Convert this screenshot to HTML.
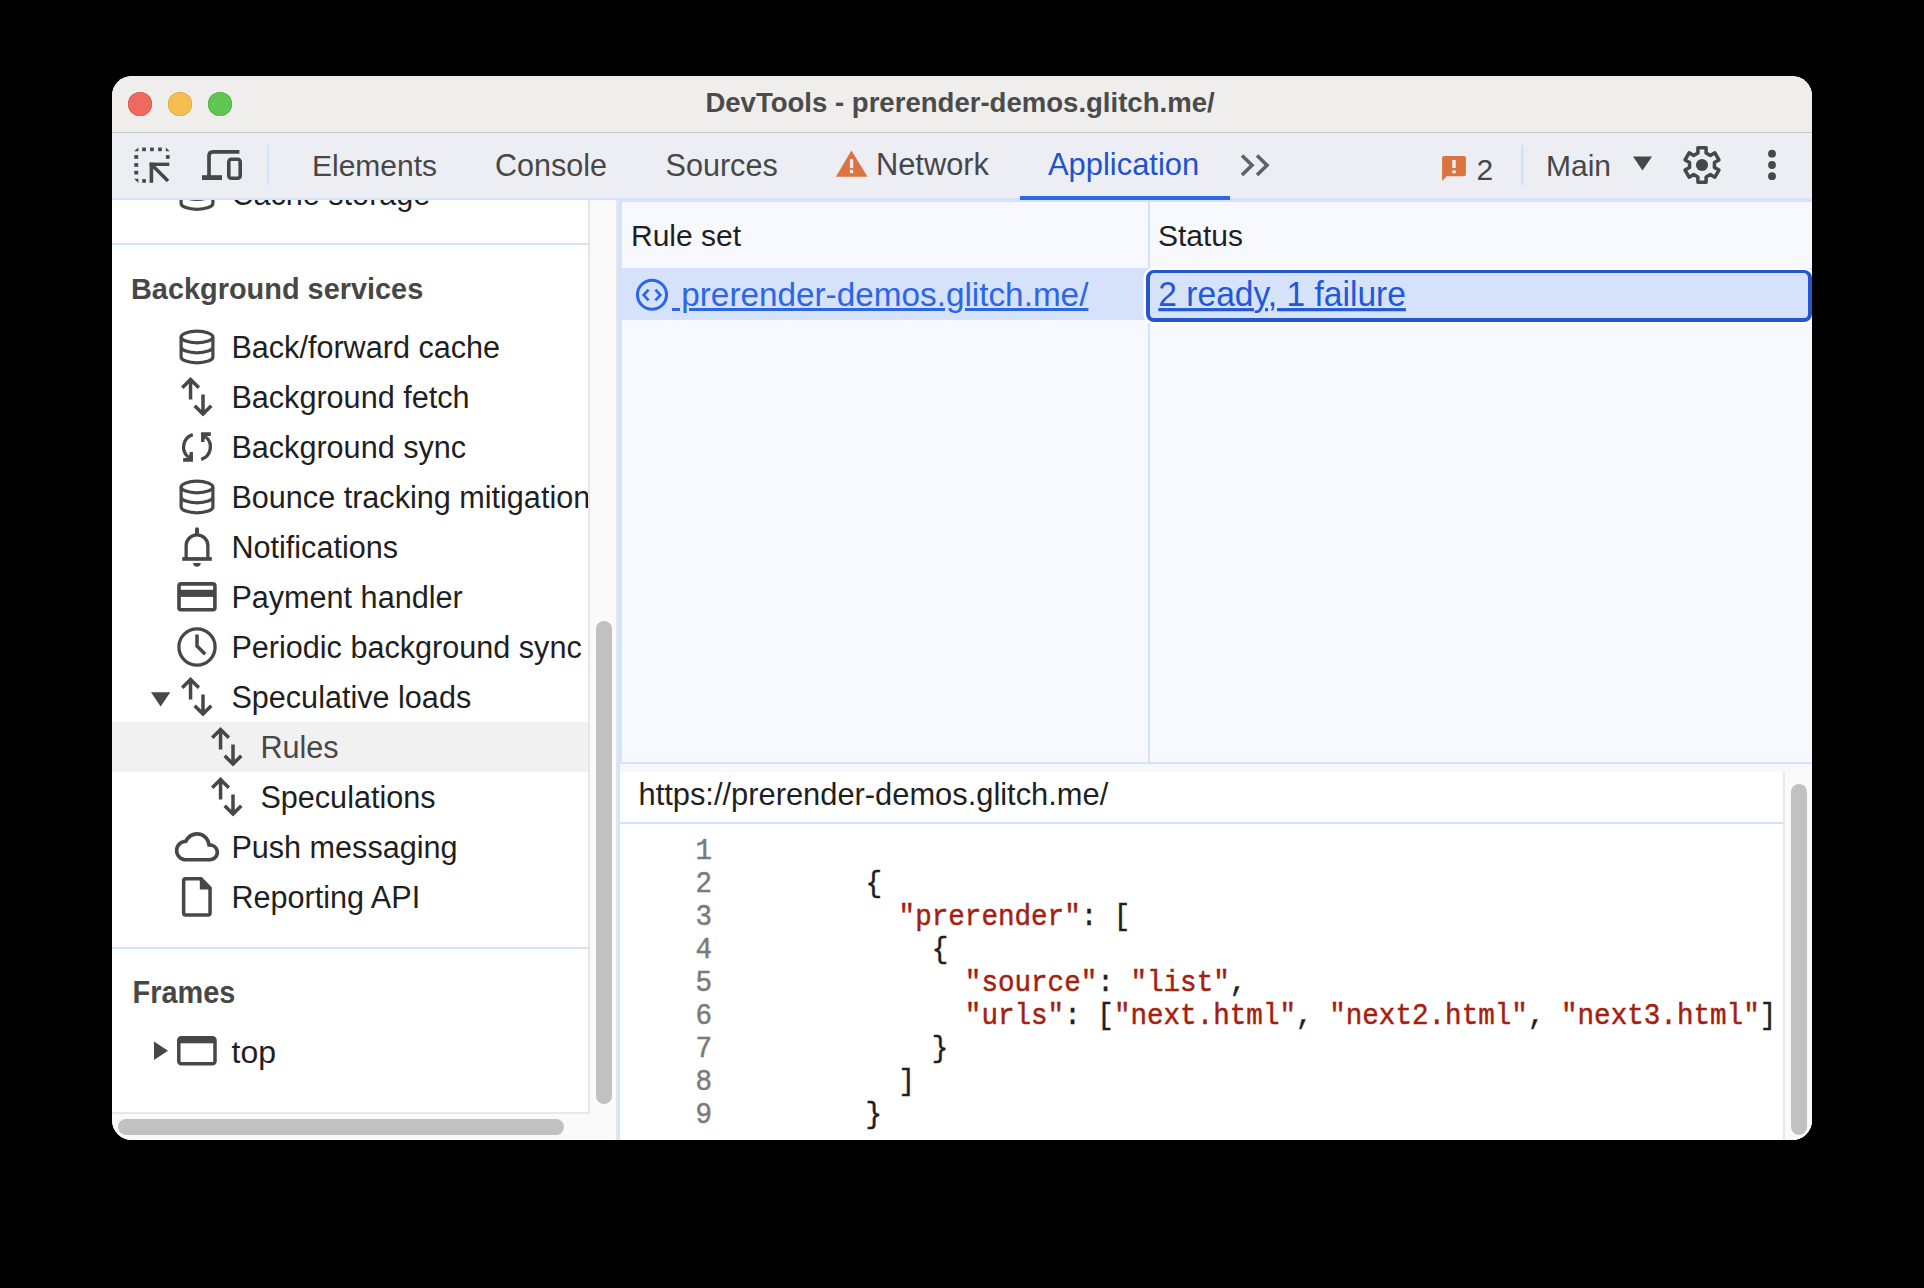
<!DOCTYPE html>
<html><head><meta charset="utf-8">
<style>
html,body{margin:0;padding:0;background:#000;width:1924px;height:1288px;overflow:hidden}
*{box-sizing:border-box}
body{font-family:"Liberation Sans",sans-serif;position:relative}
#win{position:absolute;left:112px;top:76px;width:1700px;height:1064px;border-radius:20px;overflow:hidden;background:#fff}
#abs{position:absolute;left:-112px;top:-76px;width:1924px;height:1288px}
.a{position:absolute}
.t{position:absolute;white-space:pre;line-height:1}
svg{position:absolute;overflow:visible}
.mono{font-family:"Liberation Mono",monospace;font-size:27.6px;transform:scaleY(1.07);transform-origin:0 0;-webkit-text-stroke:0.45px currentColor}
.str{color:#a31f10}
</style></head><body>
<div id="win"><div id="abs">

<!-- title bar -->
<div class="a" style="left:112px;top:76px;width:1700px;height:56px;background:#efeeec"></div>
<div class="a" style="left:112px;top:132px;width:1700px;height:1px;background:#c9c8cb"></div>
<div class="a" style="left:128px;top:92px;width:24px;height:24px;border-radius:50%;background:#ed6a5e;box-shadow:inset 0 0 0 0.6px #d05548"></div>
<div class="a" style="left:168px;top:92px;width:24px;height:24px;border-radius:50%;background:#f5bf4f;box-shadow:inset 0 0 0 0.6px #d6a03a"></div>
<div class="a" style="left:208px;top:92px;width:24px;height:24px;border-radius:50%;background:#61c554;box-shadow:inset 0 0 0 0.6px #4ea83f"></div>
<div class="t" style="left:110px;width:1700px;text-align:center;top:88.8px;font-size:27.55px;font-weight:bold;color:#4b4b4b">DevTools - prerender-demos.glitch.me/</div>

<!-- toolbar -->
<div class="a" style="left:112px;top:133px;width:1700px;height:65px;background:#eceef3"></div>
<div class="a" style="left:112px;top:198px;width:1700px;height:2px;background:#d3e3fd"></div>


<!-- inspect icon -->
<svg style="left:0;top:0" width="1924" height="1288" viewBox="0 0 1924 1288">
<g fill="#474747">
<path d="M134.1 151.3 L138.4 147.4 L138.4 151.3 Z"/>
<rect x="142.2" y="147.5" width="3.7" height="3.7"/>
<rect x="150.1" y="147.5" width="3.7" height="3.7"/>
<rect x="158.1" y="147.5" width="3.7" height="3.7"/>
<path d="M165.8 147.4 L169.6 151.3 L165.8 151.3 Z"/>
<rect x="134.3" y="155.1" width="3.9" height="3.7"/>
<rect x="134.3" y="163.1" width="3.9" height="3.7"/>
<rect x="134.3" y="170.8" width="3.9" height="3.7"/>
<path d="M134.1 178.8 L138.4 178.8 L138.4 183 Z"/>
<rect x="142.2" y="179.1" width="3.7" height="3.7"/>
<rect x="165.9" y="155.1" width="3.7" height="3.7"/>
<rect x="149.6" y="162.6" width="3.6" height="20.2"/>
<rect x="149.6" y="162.6" width="19.7" height="3.4"/>
</g>
<path d="M152 165 L168 181" stroke="#474747" stroke-width="3.6" fill="none"/>
<!-- device icon -->
<path d="M209 176 V156 Q209 151.8 213 151.8 H239.4" stroke="#474747" stroke-width="3.7" fill="none"/>
<rect x="202" y="175.2" width="20" height="4.8" fill="#474747"/>
<rect x="228.8" y="159.3" width="11.4" height="19" rx="2.5" stroke="#474747" stroke-width="3.6" fill="none"/>
<!-- separator -->
<rect x="267" y="145" width="2" height="40" fill="#d3e3fd"/>
<!-- warning -->
<path d="M851.4 150.6 L867.6 176.8 L835.9 176.8 Z" fill="#dc7440"/>
<rect x="849.9" y="159" width="3.3" height="9" fill="#eceef3"/>
<rect x="849.9" y="169.8" width="3.3" height="3.4" fill="#eceef3"/>
<!-- chevrons >> -->
<path d="M1242 155.5 L1252 165.2 L1242 175 M1257 155.5 L1267 165.2 L1257 175" stroke="#5f6368" stroke-width="3.6" fill="none"/>
<!-- issues -->
<path d="M1442.1 158 Q1442.1 156 1444.1 156 L1463.9 156 Q1465.9 156 1465.9 158 L1465.9 174.2 Q1465.9 176.2 1463.9 176.2 L1446.8 176.2 L1442.1 180.9 Z" fill="#dc7440"/>
<rect x="1452.2" y="160" width="3.5" height="8" fill="#eceef3"/>
<rect x="1452.2" y="170.5" width="3.5" height="2.8" fill="#eceef3"/>
<rect x="1521" y="145" width="2.8" height="40" fill="#d3e3fd"/>
<!-- dropdown triangle -->
<path d="M1633 156.4 L1652 156.4 L1642.5 170.5 Z" fill="#474747"/>
<!-- gear -->
<g transform="translate(1702 165)">
<path id="gearp" d="M-4.10 -12.00 L-4.10 -17.20 L4.10 -17.20 L4.10 -12.00 L8.34 -9.55 L12.85 -12.15 L16.95 -5.05 L12.44 -2.45 L12.44 2.45 L16.95 5.05 L12.85 12.15 L8.34 9.55 L4.10 12.00 L4.10 17.20 L-4.10 17.20 L-4.10 12.00 L-8.34 9.55 L-12.85 12.15 L-16.95 5.05 L-12.44 2.45 L-12.44 -2.45 L-16.95 -5.05 L-12.85 -12.15 L-8.34 -9.55 Z" stroke="#474747" stroke-width="3.5" fill="none" stroke-linejoin="round"/>
<circle cx="0" cy="0" r="6.1" fill="#474747"/>
</g>
<!-- kebab -->
<circle cx="1772" cy="153.7" r="3.9" fill="#474747"/>
<circle cx="1772" cy="165" r="3.9" fill="#474747"/>
<circle cx="1772" cy="176.2" r="3.9" fill="#474747"/>
</svg>
<!-- tabs -->
<div class="t" style="left:312px;top:150.6px;font-size:30px;color:#474747">Elements</div>
<div class="t" style="left:495px;top:150.3px;font-size:30.5px;color:#474747">Console</div>
<div class="t" style="left:665.5px;top:150.25px;font-size:30.6px;color:#474747">Sources</div>
<div class="t" style="left:876px;top:150px;font-size:30.8px;color:#474747">Network</div>
<div class="t" style="left:1048px;top:149.9px;font-size:30.9px;color:#1f52cd">Application</div>
<div class="a" style="left:1020px;top:196px;width:210px;height:4px;background:#2e67e6"></div>
<div class="t" style="left:1476.5px;top:154.6px;font-size:30px;color:#474747">2</div>
<div class="t" style="left:1546px;top:150.6px;font-size:30px;color:#474747">Main</div>



<!-- sidebar bg -->
<div class="a" style="left:112px;top:200px;width:476px;height:912px;background:#fff"></div>
<div class="a" style="left:112px;top:722px;width:476px;height:50px;background:#f1f1f1"></div>
<div class="a" style="left:588px;top:200px;width:2px;height:912px;background:#e6e6e6"></div>
<div class="a" style="left:590px;top:200px;width:26px;height:940px;background:#fafafa"></div>
<div class="a" style="left:616px;top:200px;width:2px;height:940px;background:#e6e6e6"></div>
<div class="a" style="left:596px;top:621px;width:16px;height:483px;border-radius:8px;background:#c1c1c1"></div>
<div class="a" style="left:112px;top:1112px;width:478px;height:28px;background:#fafafa;border-top:2px solid #e8e8e8"></div>
<div class="a" style="left:118px;top:1119px;width:446px;height:16px;border-radius:8px;background:#c1c1c1"></div>
<div class="a" style="left:112px;top:243px;width:476px;height:2px;background:#d3e3fd"></div>
<div class="a" style="left:112px;top:947px;width:476px;height:2px;background:#d3e3fd"></div>
<div class="a" style="left:112px;top:200px;width:476px;height:912px;overflow:hidden">
<div class="a" style="left:-112px;top:-200px;width:1924px;height:1288px">
<div class="t" style="left:231.4px;top:178.79px;font-size:30.6px;color:#1f1f1f">Cache storage</div>
<div class="t" style="left:231.4px;top:332.29px;font-size:30.6px;color:#1f1f1f">Back/forward cache</div>
<div class="t" style="left:231.4px;top:382.29px;font-size:30.6px;color:#1f1f1f">Background fetch</div>
<div class="t" style="left:231.4px;top:432.29px;font-size:30.6px;color:#1f1f1f">Background sync</div>
<div class="t" style="left:231.4px;top:482.29px;font-size:30.6px;color:#1f1f1f">Bounce tracking mitigations</div>
<div class="t" style="left:231.4px;top:532.29px;font-size:30.6px;color:#1f1f1f">Notifications</div>
<div class="t" style="left:231.4px;top:582.29px;font-size:30.6px;color:#1f1f1f">Payment handler</div>
<div class="t" style="left:231.4px;top:632.29px;font-size:30.6px;color:#1f1f1f">Periodic background sync</div>
<div class="t" style="left:231.4px;top:682.29px;font-size:30.6px;color:#1f1f1f">Speculative loads</div>
<div class="t" style="left:260.4px;top:732.29px;font-size:30.6px;color:#474747">Rules</div>
<div class="t" style="left:260.4px;top:782.29px;font-size:30.6px;color:#1f1f1f">Speculations</div>
<div class="t" style="left:231.4px;top:832.29px;font-size:30.6px;color:#1f1f1f">Push messaging</div>
<div class="t" style="left:231.4px;top:882.29px;font-size:30.6px;color:#1f1f1f">Reporting API</div>

<div class="t" style="left:131px;top:275.21px;font-size:28.9px;font-weight:bold;color:#474747">Background services</div>
<div class="t" style="left:132.5px;top:978.71px;font-size:28.9px;font-weight:bold;color:#474747;transform:scaleY(1.07);transform-origin:0 24.5px">Frames</div>
<div class="t" style="left:231.5px;top:1036.29px;font-size:32px;color:#1f1f1f">top</div>
</div></div>

<svg style="left:0;top:0" width="1924" height="1288">
<defs>
<g id="i-db" fill="none" stroke="#474747" stroke-width="3.2">
<ellipse cx="0" cy="-10" rx="15.9" ry="5.8"/>
<path d="M-15.9 -10 V10 A15.9 5.8 0 0 0 15.9 10 V-10 M-15.9 0 A15.9 5.8 0 0 0 15.9 0"/>
</g>
<g id="i-arr" fill="none" stroke="#474747" stroke-width="3.5" stroke-linejoin="miter">
<path d="M-6.45 2.4 V-17.5 M-14.75 -9.2 L-6.45 -17.5 L1.85 -9.2 M6 -2.5 V17.1 M-2.3 8.8 L6 17.1 L14.3 8.8"/>
</g>
<g id="i-sync" fill="#474747" stroke="none">
<g id="i-sync-half">
<path d="M-4.2 -12.3 A13 13 0 0 0 -9.3 9.6" fill="none" stroke="#474747" stroke-width="3.3"/>
<path d="M-13.83 11.12 L-10.3 11.12 L-7.47 7.6 L-7.47 5.08 L-4.05 5.08 L-4.05 14.7 L-13.83 14.7 Z"/>
</g>
<use href="#i-sync-half" transform="rotate(180)"/>
</g>
<g id="i-bell" fill="#474747">
<rect x="-2" y="-19.8" width="4" height="8" rx="2"/>
<path d="M-10.85 11 V-1.5 A10.85 10.55 0 0 1 10.85 -1.5 V11" fill="none" stroke="#474747" stroke-width="3.3"/>
<rect x="-14.8" y="10.1" width="29.6" height="3.7"/>
<path d="M-3.8 16.1 H3.7 A3.75 3.7 0 0 1 -3.8 16.1 Z"/>
</g>
<g id="i-card" fill="#474747">
<rect x="-18" y="-13.1" width="35.9" height="25.9" rx="2" fill="none" stroke="#474747" stroke-width="3.6"/>
<rect x="-18" y="-7.2" width="36" height="7.1"/>
</g>
<g id="i-clock" fill="none" stroke="#474747" stroke-width="3.3">
<circle cx="0" cy="0" r="18.1"/>
<path d="M0 -12.5 V-1 L8.2 7.2" stroke-width="3.5"/>
</g>
<g id="i-cloud">
<path transform="translate(-22.2 -22.4) scale(1.85)" fill="#474747" d="M19.35 10.04C18.67 6.59 15.64 4 12 4 9.11 4 6.6 5.64 5.35 8.04 2.34 8.36 0 10.91 0 14c0 3.31 2.69 6 6 6h13c2.76 0 5-2.24 5-5 0-2.64-2.05-4.78-4.65-4.960zM19 18H6c-2.21 0-4-1.79-4-4 0-2.050 1.53-3.760 3.56-3.970l1.07-.11.5-.95C8.08 7.14 9.94 6 12 6c2.62 0 4.88 1.86 5.39 4.43l.3 1.5 1.53.11c1.56.1 2.78 1.41 2.78 2.96 0 1.65-1.35 3-3 3z"/>
</g>
<g id="i-file">
<path d="M4 -18.15 H-11.35 Q-13.35 -18.15 -13.35 -16.15 V16.05 Q-13.35 18.05 -11.35 18.05 H11.05 Q13.05 18.05 13.05 16.05 V-9.1 Z" fill="none" stroke="#474747" stroke-width="3.5" stroke-linejoin="round"/>
<path d="M2.8 -19.9 L14.8 -7.9 V-7.6 H2.8 Z" fill="#474747"/>
</g>
</defs>

<clipPath id="sbclip"><rect x="112" y="200" width="476" height="912"/></clipPath>
<g clip-path="url(#sbclip)">
<use href="#i-db" transform="translate(197 193.5)"/>
<use href="#i-db" transform="translate(197 347)"/>
<use href="#i-arr" transform="translate(197 397)"/>
<use href="#i-sync" transform="translate(197 447)"/>
<use href="#i-db" transform="translate(197 497)"/>
<use href="#i-bell" transform="translate(197 547)"/>
<use href="#i-card" transform="translate(197 597)"/>
<use href="#i-clock" transform="translate(197 647)"/>
<use href="#i-arr" transform="translate(197 697)"/>
<use href="#i-arr" transform="translate(227 747)"/>
<use href="#i-arr" transform="translate(227 797)"/>
<use href="#i-cloud" transform="translate(197 847)"/>
<use href="#i-file" transform="translate(197 897)"/>

<path d="M151 692.2 H170.3 L160.65 706.4 Z" fill="#474747"/>
<path d="M154 1041.6 L168 1050.8 L154 1060 Z" fill="#474747"/>
<rect x="178.8" y="1037.8" width="36.2" height="26" rx="2.5" fill="none" stroke="#474747" stroke-width="3.5"/>
<rect x="178.8" y="1037.8" width="36.2" height="5.5" fill="#474747"/>
</g>
</svg>




<!-- main panel -->
<div class="a" style="left:618px;top:200px;width:1194px;height:940px;background:#fff"></div>
<div class="a" style="left:618px;top:200px;width:1194px;height:564px;background:#d3e3fd"></div>
<div class="a" style="left:622px;top:202px;width:1190px;height:560px;background:#f8f9fe"></div>
<div class="a" style="left:1148px;top:202px;width:2px;height:560px;background:#d3e3fd"></div>
<div class="a" style="left:620px;top:268px;width:1192px;height:52px;background:#d5e2fa"></div>
<div class="t" style="left:631px;top:221.00px;font-size:30px;color:#1f1f1f">Rule set</div>
<div class="t" style="left:1158px;top:221.00px;font-size:30px;color:#1f1f1f">Status</div>
<svg style="left:0;top:0" width="1924" height="1288">
<circle cx="652" cy="294.75" r="14.55" fill="none" stroke="#2c65e8" stroke-width="3"/>
<path d="M648.6 289.6 L643.6 295 L648.6 300.4 M655.4 289.6 L660.4 295 L655.4 300.4" fill="none" stroke="#2c65e8" stroke-width="2.6"/>
</svg>
<div class="t" style="left:672px;top:278.3px;font-size:33.3px;color:#2c65e8;text-decoration:underline;text-decoration-thickness:3px;text-underline-offset:1.5px"> prerender-demos.glitch.me/</div>
<div class="a" style="left:1146px;top:270px;width:666px;height:52px;border:4px solid #2556cc;border-top-width:3px;border-radius:8px;background:#d5e2fa;box-shadow:0 0 0 2.5px #fff"></div>
<div class="t" style="left:1158.3px;top:277.8px;font-size:33.6px;color:#2158d8;text-decoration:underline;text-decoration-thickness:3px;text-underline-offset:1.5px;transform:scaleY(1.05);transform-origin:0 28.4px">2 ready, 1 failure</div>
<div class="a" style="left:618px;top:764px;width:2px;height:376px;background:#d3e3fd"></div>
<div class="a" style="left:620px;top:764px;width:1192px;height:8px;background:#f8f9fe"></div>
<div class="a" style="left:620px;top:822px;width:1163px;height:2px;background:#d3e3fd"></div>
<div class="t" style="left:638.5px;top:779.9px;font-size:30.85px;color:#1f1f1f">https://prerender-demos.glitch.me/</div>
<div class="a" style="left:1783px;top:772px;width:29px;height:368px;background:#fafafa;border-left:2px solid #e8e8e8"></div>
<div class="a" style="left:1791px;top:784px;width:16px;height:351px;border-radius:8px;background:#c1c1c1"></div>
<div class="t mono" style="left:640px;width:72px;text-align:right;top:837.09px;color:#7b7b7b">1</div>
<div class="t mono" style="left:733px;top:837.09px;color:#1f1f1f"></div>
<div class="t mono" style="left:640px;width:72px;text-align:right;top:870.09px;color:#7b7b7b">2</div>
<div class="t mono" style="left:733px;top:870.09px;color:#1f1f1f">        {</div>
<div class="t mono" style="left:640px;width:72px;text-align:right;top:903.09px;color:#7b7b7b">3</div>
<div class="t mono" style="left:733px;top:903.09px;color:#1f1f1f">          <span class="str">"prerender"</span>: [</div>
<div class="t mono" style="left:640px;width:72px;text-align:right;top:936.09px;color:#7b7b7b">4</div>
<div class="t mono" style="left:733px;top:936.09px;color:#1f1f1f">            {</div>
<div class="t mono" style="left:640px;width:72px;text-align:right;top:969.09px;color:#7b7b7b">5</div>
<div class="t mono" style="left:733px;top:969.09px;color:#1f1f1f">              <span class="str">"source"</span>: <span class="str">"list"</span>,</div>
<div class="t mono" style="left:640px;width:72px;text-align:right;top:1002.09px;color:#7b7b7b">6</div>
<div class="t mono" style="left:733px;top:1002.09px;color:#1f1f1f">              <span class="str">"urls"</span>: [<span class="str">"next.html"</span>, <span class="str">"next2.html"</span>, <span class="str">"next3.html"</span>]</div>
<div class="t mono" style="left:640px;width:72px;text-align:right;top:1035.09px;color:#7b7b7b">7</div>
<div class="t mono" style="left:733px;top:1035.09px;color:#1f1f1f">            }</div>
<div class="t mono" style="left:640px;width:72px;text-align:right;top:1068.09px;color:#7b7b7b">8</div>
<div class="t mono" style="left:733px;top:1068.09px;color:#1f1f1f">          ]</div>
<div class="t mono" style="left:640px;width:72px;text-align:right;top:1101.09px;color:#7b7b7b">9</div>
<div class="t mono" style="left:733px;top:1101.09px;color:#1f1f1f">        }</div>



</div></div>
</body></html>
